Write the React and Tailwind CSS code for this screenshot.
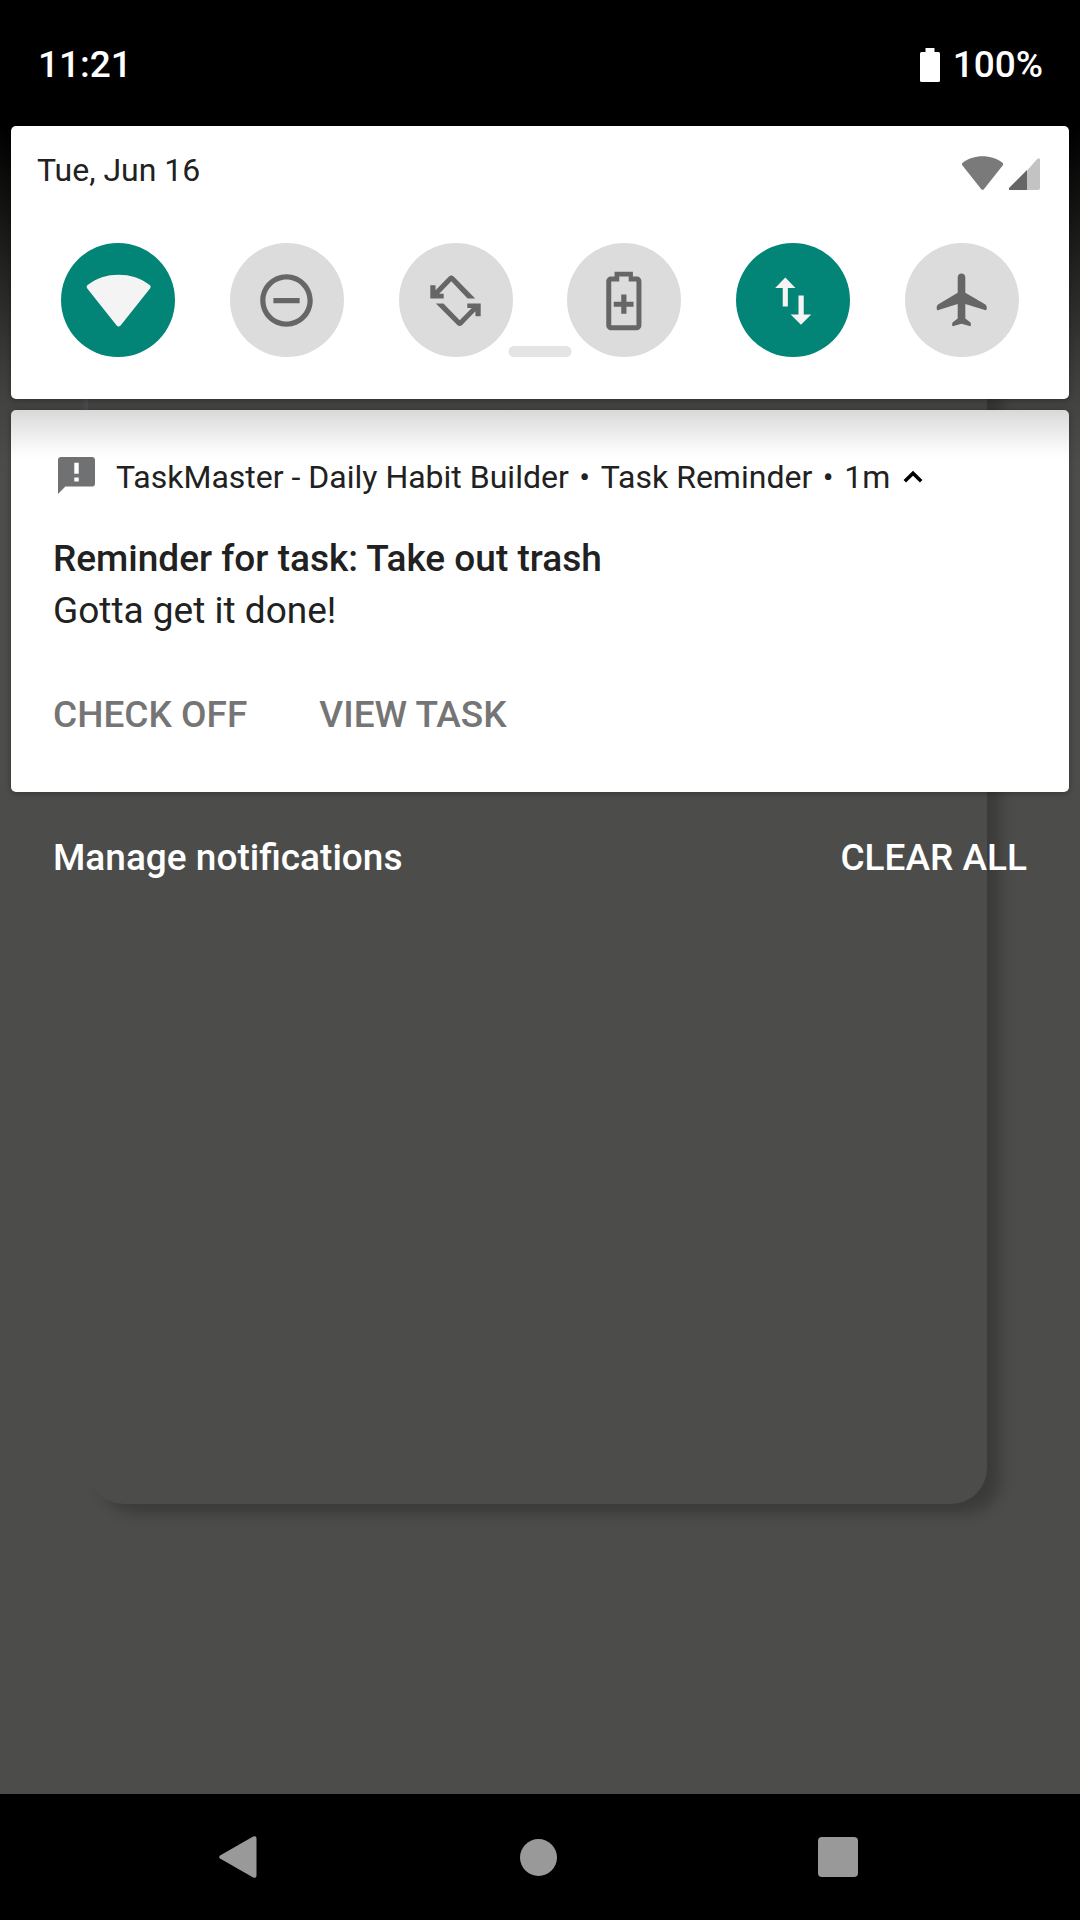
const tiles = [
  { id: 'wifi', label: 'Wi-Fi', on: true },
  { id: 'dnd', label: 'Do Not Disturb', on: false },
  { id: 'rotate', label: 'Auto-rotate', on: false },
  { id: 'battery', label: 'Battery Saver', on: false },
  { id: 'data', label: 'Mobile data', on: true },
  { id: 'airplane', label: 'Airplane mode', on: false },
];

const WIFI_PATH =
  'M12.8 21.5a1 1 0 0 1-1.5 0L.1 7.4a.9.9 0 0 1 .1-1.3C3.6 3.400 7.600 2.150 12 2.150s8.600 1.250 11.900 3.950a.9.9 0 0 1 .1 1.300z';

const tilePaths = {
  wifi: WIFI_PATH,
  dnd: 'M7 11v2h10v-2H7zm5-9C6.48 2 2 6.480 2 12s4.480 10 10 10 10-4.480 10-10S17.520 2 12 2zm0 18c-4.410 0-8-3.590-8-8s3.590-8 8-8 8 3.590 8 8-3.590 8-8 8z',
  rotate:
    'M2.400 6.200h2v1.900l5.100-5.200a1.300 1.300 0 0 1 1.800 0l8.200 8.300h-2.900l-6.200-6.500-4.600 4.700h1.700v1.800H2.400zM21.600 18h-2v-1.900l-5.100 5.200a1.300 1.300 0 0 1-1.800 0L4.500 13.100h2.900l6.200 6.400 4.600-4.600h-1.700v-1.800h5.100z',
  battery:
    'M8.200 1h7v1.900h1.400c1.100 0 1.850.8 1.850 1.900v16.600c0 1.100-.8 1.900-1.900 1.900H6.950c-1.100 0-1.900-.8-1.900-1.900V4.800c0-1.100.8-1.900 1.900-1.900H8.200zM10 2.900v1.900H6.950v16.600h9.600V4.800H13.600V2.900zM10.750 9.700h2v2.800h2.700v1.900h-2.700V17h-2v-2.600H7.900v-1.900h2.850z',
  data: 'M8.900 3.200l3.850 4h-2.900v7.100H7.900V7.200H5zM13.900 10.100h2v7.200h2.850l-3.900 3.900-3.950-3.900h3z',
  airplane:
    'M12 1.700c.8 0 1.450.65 1.450 1.450V9l7.500 4.400c.45.3.65.7.65 1.200v.5c0 .4-.3.65-.7.55L13.450 13.300V18.900l1.750 1.300c.25.2.35.4.35.7v.5c0 .3-.2.4-.5.35L12 20.900l-3.050.85c-.3.050-.5-.050-.5-.35v-.5c0-.3.100-.5.350-.7l1.750-1.300v-5.600L3.250 15.650c-.4.100-.7-.150-.7-.55v-.5c0-.5.200-.9.650-1.200L10.550 9V3.150C10.550 2.350 11.200 1.700 12 1.700z',
};

function Tile({ id, label, on }) {
  return (
    <button
      type="button"
      aria-label={label}
      aria-pressed={on}
      className={
        on
          ? 'flex size-[114px] items-center justify-center rounded-full bg-[#028577] text-[#f4f4f4]'
          : 'flex size-[114px] items-center justify-center rounded-full bg-[#dcdcdc] text-[#666666]'
      }
    >
      <svg viewBox="0 0 24 24" fill="currentColor" fillRule="evenodd" className="size-[63px] overflow-visible">
        <path d={tilePaths[id]} />
      </svg>
    </button>
  );
}

function StatusBar() {
  return (
    <header className="flex h-[126px] items-center justify-between bg-black pt-[3px] pr-[37px] pl-[38px] text-[37px] font-medium text-white">
      <time>11:21</time>
      <div className="flex items-center gap-[13px]">
        <svg viewBox="0 0 20 34" fill="currentColor" className="h-[34px] w-5">
          <path d="M5.500 0h9v4h4a1.500 1.500 0 0 1 1.500 1.500v27a1.500 1.500 0 0 1-1.500 1.500h-17A1.500 1.500 0 0 1 0 32.500v-27A1.500 1.500 0 0 1 1.500 4h4z" />
        </svg>
        <span>100%</span>
      </div>
    </header>
  );
}

function QuickSettings() {
  return (
    <section
      aria-label="Quick settings"
      className="relative rounded-[5px] bg-white pb-[42px] shadow-[0_1px_6px_rgba(0,0,0,0.3)]"
    >
      <div className="flex h-[117px] items-start justify-between pt-[25px] pr-[29px] pl-[26px]">
        <p className="text-[32px] leading-[38px] text-[#212121]">Tue, Jun 16</p>
        <div className="flex gap-[6px] pt-[5px]">
          <svg viewBox="0 2 24 20" fill="#7a7a7a" className="h-[34px] w-[41px]">
            <path d={WIFI_PATH} />
          </svg>
          <svg viewBox="0 0 31 34" className="h-[34px] w-[31px]">
            <path d="M18 14.500L27.800 3.500Q31 0.800 31 4V32a2 2 0 0 1-2 2H18z" fill="#c3c3c3" />
            <path d="M18 14v20H0v-2z" fill="#666666" />
          </svg>
        </div>
      </div>
      <div className="flex justify-between px-[50px]">
        {tiles.map((tile) => (
          <Tile key={tile.id} {...tile} />
        ))}
      </div>
      <div className="absolute bottom-[42px] left-1/2 h-[11px] w-[63px] -translate-x-1/2 rounded-full bg-[#e4e4e4]" />
    </section>
  );
}

function Notification() {
  return (
    <article className="rounded-[5px] bg-white bg-[linear-gradient(to_bottom,#d9d9d9_0px,#eeeeee_26px,#fafafa_40px,#ffffff_50px)] px-[42px] pt-[47px] pb-[51px] text-[37px] text-[#212121] shadow-[0_1px_6px_rgba(0,0,0,0.3)]">
      <div className="flex items-center text-[32px] leading-[40px]">
        <svg viewBox="2 2 20 20" fill="#707173" className="mr-[21px] ml-[5px] size-[37px] self-start">
          <path d="M20.400 2H3.600C2.700 2 2 2.700 2 3.600V22l4-4h14.400c.9 0 1.600-.7 1.600-1.600V3.600c0-.9-.7-1.600-1.600-1.600zM13.200 15.200h-2.400v-2.100h2.400zm0-4.100h-2.400V5.100h2.400z" />
        </svg>
        <span>TaskMaster - Daily Habit Builder</span>
        <span className="w-8 text-center">•</span>
        <span>Task Reminder</span>
        <span className="w-8 text-center">•</span>
        <span>1m</span>
        <button type="button" aria-label="Collapse" className="ml-[13px] text-black">
          <svg viewBox="0 0 20 14" fill="none" stroke="currentColor" strokeWidth="3.500" className="h-[14px] w-5">
            <path d="M1.800 11.300L10 3.200l8.200 8.100" />
          </svg>
        </button>
      </div>
      <h2 className="mt-9 leading-[52px] font-medium">Reminder for task: Take out trash</h2>
      <p className="leading-[52px]">Gotta get it done!</p>
      <div className="mt-[52px] flex gap-[72px] leading-[52px] font-medium text-[#757575]">
        <button type="button">CHECK OFF</button>
        <button type="button">VIEW TASK</button>
      </div>
    </article>
  );
}

function NavigationBar() {
  return (
    <nav className="flex h-[126px] items-center justify-between bg-black pr-[179px] pl-[175px] text-[#999999]">
      <button type="button" aria-label="Back" className="flex size-[126px] items-center justify-center">
        <svg viewBox="0 0 38 42" fill="currentColor" className="h-[42px] w-[38px]">
          <path d="M1 19.600L34.200.500Q37.500-.8 37.500 2.500v37q0 3.300-3.300 2L1 22.400q-1.600-1.400 0-2.800z" />
        </svg>
      </button>
      <button type="button" aria-label="Home" className="flex size-[126px] items-center justify-center">
        <span className="size-[37px] rounded-full bg-[#999999]" />
      </button>
      <button type="button" aria-label="Recent apps" className="flex size-[126px] items-center justify-center">
        <span className="size-10 rounded-[4px] bg-[#999999]" />
      </button>
    </nav>
  );
}

export default function App() {
  return (
    <div className="flex min-h-screen flex-col bg-[#4c4c4a] font-['Roboto',sans-serif]">
      <StatusBar />
      <main className="relative isolate flex flex-1 flex-col gap-[11px] bg-[linear-gradient(to_bottom,#000000_0px,#1a1a18_110px,#40403e_260px,#4c4c4a_340px)] px-[11px]">
        <div className="absolute top-[180px] right-[93px] bottom-[290px] left-[88px] -z-10 rounded-[36px] shadow-[14px_10px_14px_rgba(0,0,0,0.22),-4px_0_6px_#4d4d4f]" />
        <QuickSettings />
        <Notification />
        <div className="mt-[29px] flex justify-between px-[42px] text-[37px] leading-[52px] font-medium text-white">
          <button type="button">Manage notifications</button>
          <button type="button">CLEAR ALL</button>
        </div>
      </main>
      <NavigationBar />
    </div>
  );
}
